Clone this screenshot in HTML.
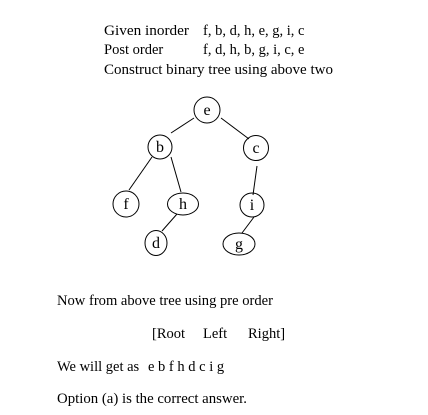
<!DOCTYPE html>
<html><head><meta charset="utf-8"><style>
html,body{margin:0;padding:0;background:#fff;}
svg{display:block;}
text{font-family:"Liberation Serif",serif;font-size:14.5px;fill:#000;}
.n{font-size:16px;}
</style></head><body>
<svg width="428" height="415" viewBox="0 0 428 415" xmlns="http://www.w3.org/2000/svg">
<text x="104" y="35" textLength="85" lengthAdjust="spacingAndGlyphs">Given inorder</text>
<text x="203" y="35">f, b, d, h, e, g, i, c</text>
<text x="104" y="54">Post order</text>
<text x="203" y="54">f, d, h, b, g, i, c, e</text>
<text x="104" y="74" textLength="229" lengthAdjust="spacingAndGlyphs">Construct binary tree using above two</text>
<g stroke="#000" stroke-width="1" fill="none">
<line x1="194" y1="118" x2="171" y2="133"/>
<line x1="221" y1="118" x2="249" y2="139"/>
<line x1="152" y1="157" x2="129" y2="190"/>
<line x1="171" y1="157" x2="181" y2="192"/>
<line x1="257" y1="166" x2="253" y2="195"/>
<line x1="177" y1="214" x2="162" y2="231"/>
<line x1="254" y1="217" x2="242" y2="233"/>
<ellipse cx="207" cy="110" rx="13" ry="13"/>
<ellipse cx="160" cy="147" rx="12" ry="12"/>
<ellipse cx="256" cy="148" rx="12.5" ry="12.5"/>
<ellipse cx="126" cy="204" rx="13" ry="13"/>
<ellipse cx="183" cy="204" rx="15.5" ry="11"/>
<ellipse cx="252" cy="205" rx="12" ry="12"/>
<ellipse cx="156" cy="243" rx="11" ry="12.5"/>
<ellipse cx="239" cy="244" rx="16" ry="11"/>
</g>
<g text-anchor="middle">
<text class="n" x="207" y="115">e</text>
<text class="n" x="160" y="152">b</text>
<text class="n" x="256" y="153">c</text>
<text class="n" x="126" y="209">f</text>
<text class="n" x="183" y="209">h</text>
<text class="n" x="252" y="210">i</text>
<text class="n" x="156" y="248">d</text>
<text class="n" x="239" y="249">g</text>
</g>
<text x="57" y="305" textLength="216" lengthAdjust="spacingAndGlyphs">Now from above tree using pre order</text>
<text x="152" y="338">[Root</text>
<text x="203" y="338">Left</text>
<text x="248" y="338">Right]</text>
<text x="57" y="371">We will get as</text>
<text x="148" y="371">e b f h d c i g</text>
<text x="57" y="403" textLength="190" lengthAdjust="spacingAndGlyphs">Option (a) is the correct answer.</text>
</svg>
</body></html>
